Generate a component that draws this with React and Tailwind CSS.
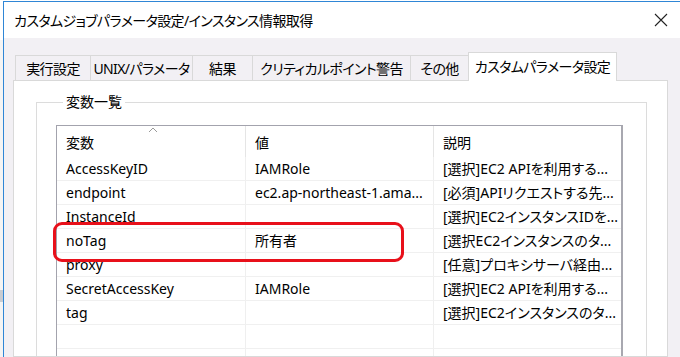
import React from 'react';

const tabs = [
  { label: '実行設定', w: 'w-[76px]' },
  { label: 'UNIX/パラメータ', w: 'w-[103px]' },
  { label: '結果', w: 'w-[61px]' },
  { label: 'クリティカルポイント警告', w: 'w-[159px]' },
  { label: 'その他', w: 'w-[59px]' },
];

const rows = [
  ['AccessKeyID', 'IAMRole', '[選択]EC2 APIを利用する...'],
  ['endpoint', 'ec2.ap-northeast-1.ama...', '[必須]APIリクエストする先...'],
  ['InstanceId', '', '[選択]EC2インスタンスIDを...'],
  ['noTag', '所有者', '[選択EC2インスタンスのタ...'],
  ['proxy', '', '[任意]プロキシサーバ経由...'],
  ['SecretAccessKey', 'IAMRole', '[選択]EC2 APIを利用する...'],
  ['tag', '', '[選択]EC2インスタンスのタ...'],
  ['', '', ''],
  ['', '', ''],
];

const App = () => {
  return (
    <div className="relative w-[680px] h-[357px] overflow-hidden bg-white flex font-['Noto_Sans','Noto_Sans_CJK_JP',sans-serif] [font-feature-settings:'palt'] text-black">
      {/* 背景のウィンドウの端 */}
      <div className="w-[3px] shrink-0 flex flex-col">
        <div className="h-[40px] shrink-0 bg-white" />
        <div className="h-[250px] shrink-0 bg-[#f4f4f4]" />
        <div className="h-[12px] shrink-0 bg-[#c9ccd2]" />
        <div className="flex-1 bg-[#f4f4f4]" />
      </div>

      {/* ダイアログ */}
      <div className="flex-1 min-h-0 flex flex-col mt-px border-l border-t border-[#2f86d6] overflow-hidden">
        {/* タイトルバー */}
        <div className="h-[36px] shrink-0 bg-white flex items-center justify-between pl-[10px] pr-[12px]">
          <span className="text-[14px] tracking-[-0.6px] whitespace-nowrap">カスタムジョブパラメータ設定/インスタンス情報取得</span>
          <svg width="14" height="14" viewBox="0 0 14 14">
            <path d="M1 1 L13 13 M13 1 L1 13" stroke="#222" strokeWidth="1.1" fill="none" />
          </svg>
        </div>

        {/* 本体 */}
        <div className="flex-1 min-h-0 flex flex-col bg-[#f2f0f4] pl-[9px] pr-[12px] pt-[13px]">
          {/* タブ */}
          <div className="shrink-0 flex items-end ml-[2px] h-[29px] relative z-10">
            {tabs.map((t) => (
              <div
                key={t.label}
                className={`${t.w} shrink-0 h-[25px] border border-b-0 border-[#d9d9d9] -ml-px first:ml-0 flex items-center justify-center text-[14px] whitespace-nowrap tracking-[-0.6px]`}
              >
                {t.label}
              </div>
            ))}
            <div className="w-[149px] shrink-0 h-[29px] -ml-px bg-white border border-b-0 border-[#d9d9d9] flex items-center justify-center text-[14px] whitespace-nowrap tracking-[-0.6px] mb-[-1px] pb-[2px]">
              カスタムパラメータ設定
            </div>
          </div>

          {/* タブの中身 */}
          <div className="flex-1 min-h-0 bg-white border border-[#d9d9d9] pl-[22px] pr-[20px] pt-[11px] overflow-hidden">
            <fieldset className="h-[300px] border border-[#dcdcdc] pl-[19px] pr-[23px]">
              <legend className="ml-[7px] px-[3px] text-[14px] leading-[20px]">変数一覧</legend>

              <div className="mt-[13px] h-[260px] border-l border-t border-[#a3a3ad] border-r-2 border-r-[#a8a8b0] text-[14px]">
                {/* ヘッダー */}
                <div className="grid grid-cols-[189px_188px_1fr] h-[31px]">
                  <div className="relative border-r border-[#e5e5e5] pl-[9px] pt-[6px] leading-[22px]">
                    変数
                    <svg width="10" height="6" viewBox="0 0 10 6" className="absolute left-[91px] top-[1px]">
                      <path d="M1 5 L5 1 L9 5" stroke="#9a9a9a" strokeWidth="1" fill="none" />
                    </svg>
                  </div>
                  <div className="border-r border-[#e5e5e5] pl-[9px] pt-[6px] leading-[22px]">値</div>
                  <div className="pl-[9px] pt-[6px] leading-[22px]">説明</div>
                </div>

                {/* 行 */}
                {rows.map((r, i) => (
                  <div key={i} className="grid grid-cols-[189px_188px_1fr] h-[24px] border-b border-[#f0f0f0] leading-[23px]">
                    <div className="border-r border-[#efefef] pl-[9px] whitespace-nowrap overflow-hidden">{r[0]}</div>
                    <div className="border-r border-[#efefef] pl-[9px] whitespace-nowrap overflow-hidden">{r[1]}</div>
                    <div className="pl-[9px] whitespace-nowrap overflow-hidden">{r[2]}</div>
                  </div>
                ))}
              </div>
            </fieldset>
          </div>
        </div>
      </div>

      {/* 赤枠の注釈 */}
      <div className="absolute left-[53px] top-[222px] w-[351px] h-[40px] border-[3px] border-[#e8101a] rounded-[9px] pointer-events-none" />
    </div>
  );
};

export default App;
